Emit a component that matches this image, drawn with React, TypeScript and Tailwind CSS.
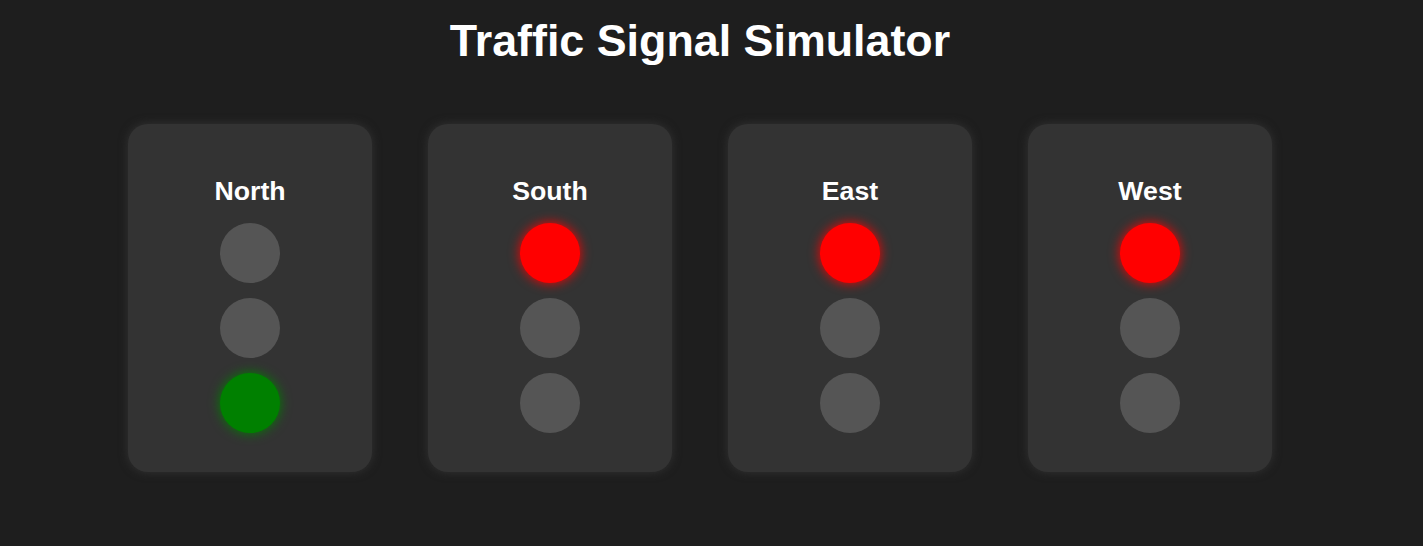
const directions = [
  { name: "North", active: "green" },
  { name: "South", active: "red" },
  { name: "East", active: "red" },
  { name: "West", active: "red" },
];

const Light = ({ on, color }: { on: boolean; color: string }) => {
  if (!on) return <div className="w-[60px] h-[60px] rounded-full bg-[#555555]" />;
  if (color === "red")
    return <div className="w-[60px] h-[60px] rounded-full bg-[#ff0000] shadow-[0_0_12px_#ff0000]" />;
  if (color === "yellow")
    return <div className="w-[60px] h-[60px] rounded-full bg-[#ffff00] shadow-[0_0_12px_#ffff00]" />;
  return <div className="w-[60px] h-[60px] rounded-full bg-[#008000] shadow-[0_0_12px_#008000]" />;
};

const SignalCard = ({ name, active }: { name: string; active: string }) => {
  return (
    <div className="w-[244px] h-[348px] rounded-[20px] bg-[#333333] shadow-[0_0_10px_#333333] flex flex-col items-center pt-[52px]">
      <div className="text-[26.7px] leading-[31px] font-bold text-white">{name}</div>
      <div className="flex flex-col items-center gap-[15px] mt-[16px]">
        <Light on={active === "red"} color="red" />
        <Light on={active === "yellow"} color="yellow" />
        <Light on={active === "green"} color="green" />
      </div>
    </div>
  );
};

export default function App() {
  return (
    <div className="min-h-[546px] w-full bg-[#1e1e1e] font-['Liberation_Sans',Arial,sans-serif]">
      <div className="w-[1400px] flex flex-col items-center pt-[15px]">
        <h1 className="text-[44.8px] leading-[51px] font-bold text-white">Traffic Signal Simulator</h1>
        <div className="flex gap-[56px] mt-[58px]">
          {directions.map((d) => (
            <SignalCard key={d.name} name={d.name} active={d.active} />
          ))}
        </div>
      </div>
    </div>
  );
}
